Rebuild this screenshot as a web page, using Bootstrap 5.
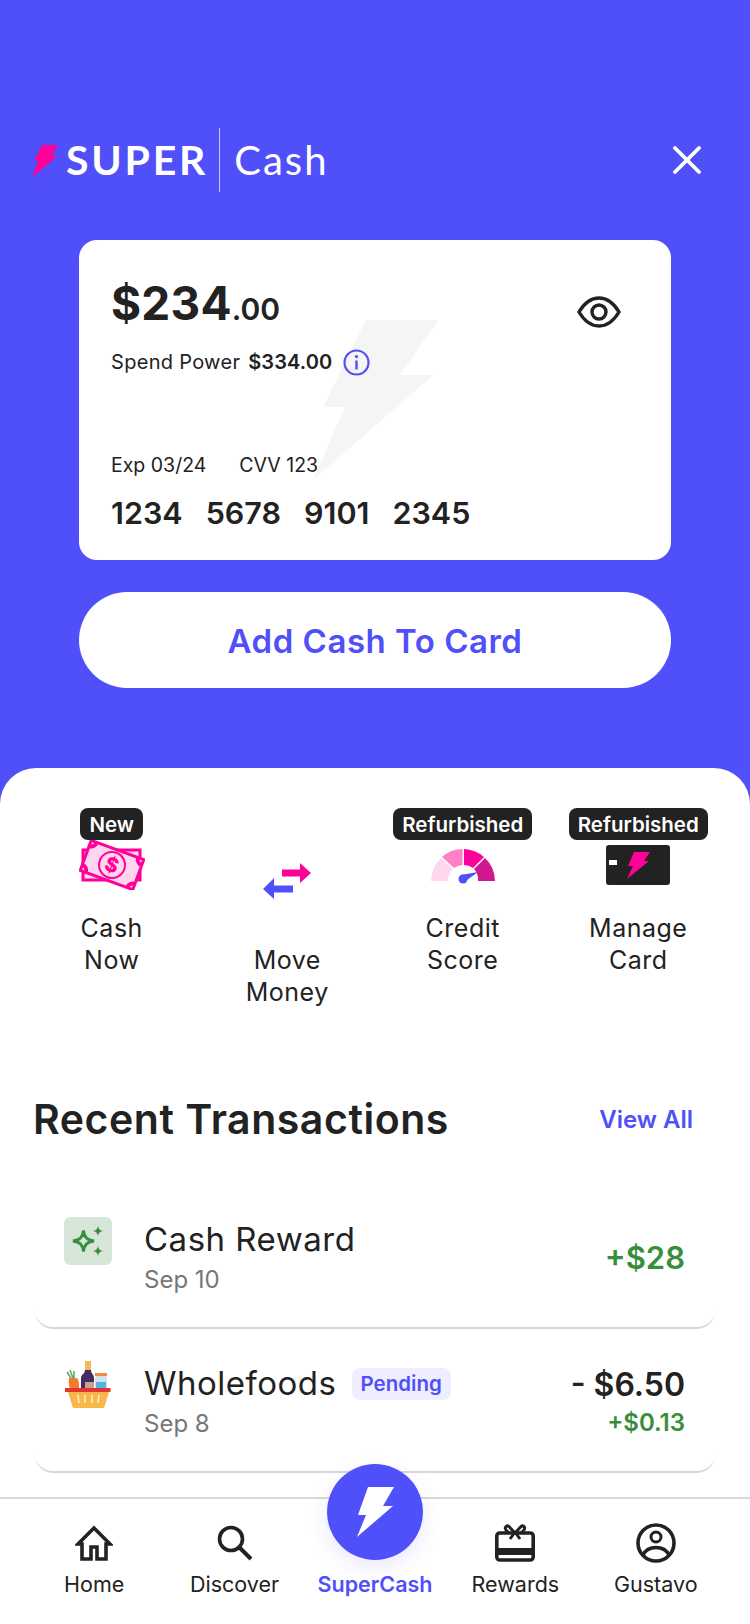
<!DOCTYPE html>
<html lang="en">
<head>
<meta charset="utf-8">
<title>SuperCash</title>
<meta name="viewport" content="width=device-width,initial-scale=1">
<link href="https://cdn.jsdelivr.net/npm/bootstrap@5.3.2/dist/css/bootstrap.min.css" rel="stylesheet">
<style>
  body          { font-family:Inter,"Liberation Sans",sans-serif; color:#222; background:#5050fa; width:750px; height:1624px; overflow:hidden; position:relative; }
  .top-bar      { padding:128px 48px 0 32px; height:240px; align-items:flex-start; }
  .brand-super  { font-family:Lato,sans-serif; font-weight:700; font-size:41px; letter-spacing:2.8px; color:#fff; line-height:64px; margin-left:8px; }
  .brand-cash   { font-family:Lato,sans-serif; font-weight:400; font-size:40px; letter-spacing:2px; color:#fff; line-height:64px; border-left:1px solid #c9c9fb; margin-left:11px; padding-left:14px; }
  .close-x      { margin-top:18px; margin-right:1px; }
  .pay-card     { margin:0 79px; height:320px; border:0; border-radius:18px; padding:31px 32px 0; position:relative; }
  .bolt-mark    { position:absolute; left:234px; top:80px; }
  .bal          { font-size:46px; font-weight:700; line-height:64px; letter-spacing:.2px; }
  .bal span     { font-size:30px; font-weight:600; letter-spacing:0; }
  .spend        { font-size:20px; letter-spacing:.3px; line-height:32px; margin-top:5px; }
  .spend b      { font-weight:600; margin-left:8px; margin-right:11px; font-size:20px; letter-spacing:.1px; }
  .card-meta    { font-size:19.5px; line-height:32px; margin-top:71px; }
  .card-meta span { margin-right:33px; }
  .card-num     { font-size:30.5px; font-weight:600; line-height:40px; margin-top:12px; gap:23px; }
  .eye-btn      { position:absolute; left:498px; top:56px; }
  .add-btn      { display:block; margin:32px 79px 0; width:592px; height:96px; border:0; border-radius:48px; background:#fff; color:#5050fa; font-size:33px; font-weight:600; letter-spacing:.5px; padding:3px 0 0; }
  .add-btn:hover{ background:#fff; color:#5050fa; }
  .sheet        { background:#fff; margin-top:80px; height:860px; border-radius:36px 36px 0 0; padding-top:40px; }
  .tiles        { display:grid; grid-template-columns:repeat(4,175.5px); padding-left:24px; height:240px; }
  .tile         { text-align:center; font-size:25px; letter-spacing:.5px; line-height:32px; }
  .tile-tag     { display:inline-block; background:#222; color:#fff; font-size:20.5px; font-weight:600; letter-spacing:0; line-height:34px; height:32px; padding:0 9px; border-radius:8px; vertical-align:top; }
  .tile-ico     { height:56px; display:flex; justify-content:center; align-items:flex-start; }
  .tile-lbl     { margin-top:16px; }
  .tile-plain   { padding-top:40px; }
  .tile-plain .tile-lbl { margin-top:40px; }
  .arrows-ico   { margin-top:14px; }
  .chip-ico     { margin-top:5px; }
  .recent-head  { padding:0 57px 0 33px; margin-top:32px; margin-bottom:42px; height:80px; }
  .recent-head h2 { font-size:41px; font-weight:600; margin:0; letter-spacing:.55px; }
  .view-all     { color:#5050fa; font-size:24px; font-weight:600; text-decoration:none; }
  .tx-row       { margin:0 34px; height:144px; padding:32px 31px 0 30px; border:0; border-radius:0 0 20px 20px; border-bottom:2px solid #d8d8d8; }
  .tx-first     { height:127px; padding-top:15px; }
  .tx-ico       { width:48px; height:48px; flex:none; margin-right:32px; }
  .tx-name      { font-size:33px; letter-spacing:.5px; line-height:44px; }
  .tx-date      { font-size:24px; line-height:32px; color:#777; margin-top:3px; }
  .tx-pending   { display:inline-block; background:#eeeefe; color:#5050fa; font-size:20.5px; font-weight:600; letter-spacing:0; line-height:32px; padding:0 9px; border-radius:8px; margin-left:15px; vertical-align:4px; }
  .tx-amt       { font-size:32px; font-weight:600; line-height:44px; text-align:right; margin-top:2px; }
  .tx-green     { color:#388e3c; font-size:31px; margin-top:19px; }
  .tx-sub       { font-size:24px; font-weight:600; line-height:32px; text-align:right; color:#388e3c; }
  .tab-bar      { position:absolute; left:0; right:0; bottom:0; height:127px; background:#fff; border-top:2px solid #d8d8d8; padding:0 24px; display:grid; grid-template-columns:repeat(5,140.4px); }
  .tab-item     { text-align:center; font-size:21.5px; line-height:30px; padding-top:21px; color:#222; }
  .tab-ico      { height:46px; display:flex; justify-content:center; align-items:center; margin-bottom:3px; }
  .tab-active   { color:#5050fa; font-weight:600; padding-top:70px; }
  .cash-fab     { position:absolute; left:327px; top:1464px; width:96px; height:96px; border-radius:50%; background:#5050fa; box-shadow:0 8px 20px rgba(80,80,250,.12); }
</style>
</head>
<body>

<!-- header -->
<div class="top-bar d-flex justify-content-between">
  <div class="d-flex align-items-start">
    <svg class="mt-3" width="26" height="34" viewBox="0 0 26 34"><path d="M10 1H26L20 12H25.500L.5 33L6 16H2.500Z" fill="#ff0099"/></svg>
    <span class="brand-super">SUPER</span>
    <span class="brand-cash">Cash</span>
  </div>
  <svg class="close-x" width="28" height="28" viewBox="0 0 28 28"><path d="M2 2L26 26M26 2L2 26" stroke="#fff" stroke-width="3.800" stroke-linecap="round"/></svg>
</div>

<!-- card -->
<div class="card pay-card">
  <svg class="bolt-mark" width="126" height="162" viewBox="0 0 126 162"><path d="M53 0H125L87 55H120L0 160L32 87H10Z" fill="#f5f5f5"/></svg>
  <div class="bal position-relative">$234<span>.00</span></div>
  <div class="spend d-flex align-items-center position-relative">Spend Power <b>$334.00</b>
    <svg width="27" height="27" viewBox="0 0 27 27"><circle cx="13.500" cy="13.500" r="12" fill="none" stroke="#5050fa" stroke-width="2.200"/><rect x="12.300" y="11.500" width="2.400" height="9" fill="#5050fa"/><circle cx="13.500" cy="7.600" r="1.600" fill="#5050fa"/></svg>
  </div>
  <div class="card-meta position-relative"><span>Exp 03/24</span><span>CVV 123</span></div>
  <div class="card-num d-flex position-relative"><span>1234</span><span>5678</span><span>9101</span><span>2345</span></div>
  <svg class="eye-btn" width="44" height="32" viewBox="0 0 44 32"><path d="M2 16C8 6 14 2 22 2S36 6 42 16C36 26 30 30 22 30S8 26 2 16Z" fill="none" stroke="#222" stroke-width="3.400"/><circle cx="22" cy="16" r="7" fill="none" stroke="#222" stroke-width="3.400"/></svg>
</div>

<button class="btn add-btn">Add Cash To Card</button>

<!-- bottom sheet -->
<div class="sheet">
  <div class="tiles">
    <div class="tile">
      <span class="tile-tag">New</span>
      <div class="tile-ico">
        <svg width="66" height="50" viewBox="0 0 66 50"><rect x="4" y="10" width="57" height="30" fill="#ffd6ee" stroke="#ff0099" stroke-width="3"/><g transform="rotate(20 33 25)"><rect x="5" y="9" width="56" height="32" fill="#ffd6ee" stroke="#ff0099" stroke-width="3"/><path d="M5 15a6 6 0 0 0 6-6M61 15a6 6 0 0 1-6-6M5 35a6 6 0 0 1 6 6M61 35a6 6 0 0 0-6 6" fill="none" stroke="#ff0099" stroke-width="4"/><circle cx="33" cy="25" r="13" fill="#ffd6ee" stroke="#ff0099" stroke-width="2"/></g><text x="33" y="32" text-anchor="middle" font-family="Inter,sans-serif" font-size="20" font-weight="800" fill="#ff0099" transform="rotate(20 33 25)">$</text></svg>
      </div>
      <div class="tile-lbl">Cash<br>Now</div>
    </div>
    <div class="tile tile-plain">
      <div class="tile-ico">
        <svg class="arrows-ico" width="48" height="37" viewBox="0 0 48 37"><path d="M19 7.500H37V1L48 11L37 21V14.500H19Z" fill="#ff0099"/><path d="M30 23.500H11V16L0 27L11 37V30.500H30Z" fill="#5050fa"/></svg>
      </div>
      <div class="tile-lbl">Move<br>Money</div>
    </div>
    <div class="tile">
      <span class="tile-tag">Refurbished</span>
      <div class="tile-ico pt-2">
        <svg width="64" height="36" viewBox="0 0 64 36"><path d="M0 33A32 32 0 0 1 10 10L22 21A16 16 0 0 0 17 33Z" fill="#ffd6ee"/><path d="M11 9A32 32 0 0 1 31.500 1V17A16 16 0 0 0 23 20Z" fill="#ff80c8"/><path d="M33 1A32 32 0 0 1 53 9L42 20A16 16 0 0 0 33 17Z" fill="#ff0099"/><path d="M54 10A32 32 0 0 1 64 33H47A16 16 0 0 0 43 21Z" fill="#d0188f"/><path d="M30 27L47 24L32 35Z" fill="#5050fa"/><circle cx="32" cy="31" r="4.500" fill="#5050fa"/></svg>
      </div>
      <div class="tile-lbl">Credit<br>Score</div>
    </div>
    <div class="tile">
      <span class="tile-tag">Refurbished</span>
      <div class="tile-ico">
        <svg class="chip-ico" width="64" height="40" viewBox="0 0 64 40"><rect width="64" height="40" rx="3" fill="#222"/><rect x="3" y="15" width="8" height="5" fill="#fff"/><path d="M28 7H44L38 16H43L21 34L27 21H22Z" fill="#ff0099"/></svg>
      </div>
      <div class="tile-lbl">Manage<br>Card</div>
    </div>
  </div>

  <div class="recent-head d-flex justify-content-between align-items-center">
    <h2>Recent Transactions</h2>
    <a class="view-all" href="#">View All</a>
  </div>

  <div class="tx-row tx-first d-flex">
    <div class="tx-ico">
      <svg width="48" height="48" viewBox="0 0 48 48"><rect width="48" height="48" rx="6" fill="#d7e6d8"/><path d="M19.500 13.500C20.500 20.500 23 23 30 24C23 25 20.500 27.500 19.500 34.500C18.500 27.500 16 25 9 24C16 23 18.500 20.500 19.500 13.500Z" fill="none" stroke="#388e3c" stroke-width="2.800"/><path d="M34 9C34.500 12 36 13.500 39 14C36 14.500 34.500 16 34 19C33.500 16 32 14.500 29 14C32 13.500 33.500 12 34 9ZM34 29C34.500 32 36 33.500 39 34C36 34.500 34.500 36 34 39C33.500 36 32 34.500 29 34C32 33.500 33.500 32 34 29Z" fill="#388e3c"/></svg>
    </div>
    <div class="flex-grow-1">
      <div class="tx-name">Cash Reward</div>
      <div class="tx-date">Sep 10</div>
    </div>
    <div class="tx-amt tx-green">+$28</div>
  </div>

  <div class="tx-row d-flex">
    <div class="tx-ico">
      <svg width="48" height="48" viewBox="0 0 48 48"><path d="M21 0h6v9h-6z" fill="#f4b860"/><path d="M21 9h6c0 4 3 4 3 8v15H17V17c0-4 4-4 4-8z" fill="#4a2a63"/><rect x="21" y="21" width="9" height="9" fill="#c9a08e"/><rect x="31" y="12" width="12" height="3" fill="#ef8a4a"/><rect x="31" y="15" width="12" height="16" rx="2" fill="#cfe3ea"/><rect x="32" y="21" width="10" height="8" fill="#4fb6e0"/><path d="M3 11l4 6M6 9l3 8M10 10l0 7" stroke="#58a65c" stroke-width="1.500" fill="none"/><path d="M5 17h7c2 0 3 3 3 8v6H9C6 31 4 22 5 17z" fill="#f47b2c"/><rect y="27" width="45.500" height="4" transform="translate(1 0)" fill="#e2352b"/><path d="M4 31h41l-5 16H9z" fill="#f9b74a"/><path d="M14 34l1 8M21 34v8M28 34v8M35 34l-1 8" stroke="#fff3d6" stroke-width="1.500"/></svg>
    </div>
    <div class="flex-grow-1">
      <div class="tx-name">Wholefoods<span class="tx-pending">Pending</span></div>
      <div class="tx-date">Sep 8</div>
    </div>
    <div>
      <div class="tx-amt">- $6.50</div>
      <div class="tx-sub">+$0.13</div>
    </div>
  </div>
</div>

<!-- bottom nav -->
<nav class="tab-bar">
  <div class="tab-item">
    <div class="tab-ico"><svg width="38" height="36" viewBox="0 0 38 36"><path d="M19 3L3 19H7V34H16V22H22V34H31V19H35Z" fill="none" stroke="#222" stroke-width="3.600" stroke-linejoin="miter"/></svg></div>Home
  </div>
  <div class="tab-item">
    <div class="tab-ico"><svg width="36" height="36" viewBox="0 0 36 36"><circle cx="14" cy="14" r="11.500" fill="none" stroke="#222" stroke-width="3.600"/><path d="M22.500 22.500L34 34" stroke="#222" stroke-width="4"/></svg></div>Discover
  </div>
  <div class="tab-item tab-active">SuperCash</div>
  <div class="tab-item">
    <div class="tab-ico"><svg width="40" height="38" viewBox="0 0 40 38"><rect x="1.800" y="9" width="36.400" height="27" rx="3" fill="none" stroke="#222" stroke-width="3.600"/><path d="M2 24H38V31H2Z" fill="#222"/><path d="M20 9L14 2.500C12 1 9 3 11 6L14 9M20 9L26 2.500C28 1 31 3 29 6L26 9M20 8L15 15M20 8L25 15" fill="none" stroke="#222" stroke-width="3"/></svg></div>Rewards
  </div>
  <div class="tab-item">
    <div class="tab-ico"><svg width="40" height="40" viewBox="0 0 40 40"><circle cx="20" cy="20" r="18" fill="none" stroke="#222" stroke-width="3.600"/><circle cx="20" cy="14" r="5" fill="none" stroke="#222" stroke-width="3"/><path d="M7 32C10 26 15 24.500 20 24.500S30 26 33 32" fill="none" stroke="#222" stroke-width="3.600"/></svg></div>Gustavo
  </div>
</nav>
<div class="cash-fab d-flex align-items-center justify-content-center">
  <svg width="38" height="50" viewBox="0 0 38 50"><path d="M12 0H38L27 19H37L1 50L10 28H2Z" fill="#fff"/></svg>
</div>

<script src="https://cdn.jsdelivr.net/npm/bootstrap@5.3.2/dist/js/bootstrap.bundle.min.js"></script>
</body>
</html>
